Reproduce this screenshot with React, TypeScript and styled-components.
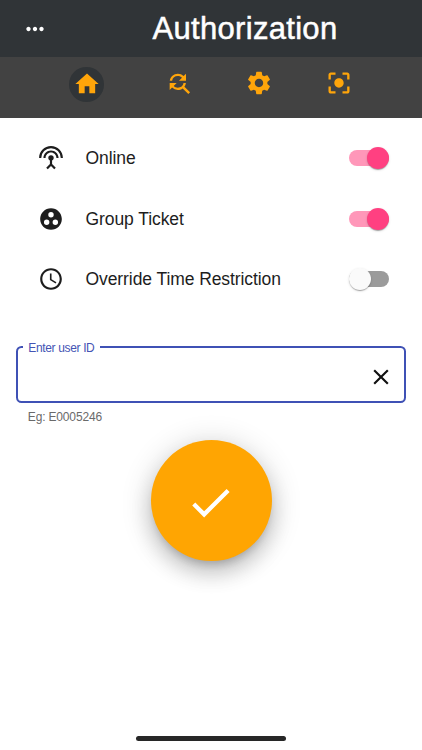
import React, { useState } from 'react';
import styled, { createGlobalStyle } from 'styled-components';
import {
  MdAccessTime,
  MdCenterFocusStrong,
  MdCheck,
  MdClose,
  MdFindReplace,
  MdGroupWork,
  MdHome,
  MdMoreHoriz,
  MdSettings,
  MdSettingsInputAntenna,
} from 'react-icons/md';

const GlobalStyle = createGlobalStyle`
  * { box-sizing: border-box; }
  body {
    margin: 0;
    background: #fff;
    font-family: "Liberation Sans", Arial, sans-serif;
  }
  svg { display: block; flex: none; }
`;

const Screen = styled.div`
  display: flex;
  flex-direction: column;
  height: 750px;
  width: 422px;
  overflow: hidden;
  background: #fff;
`;

const Header = styled.header`
  display: grid;
  grid-template-columns: 69.4px 1fr;
  align-items: center;
  height: 57px;
  background: #303437;
  color: #fff;
`;

const MenuButton = styled.button`
  display: flex;
  justify-content: center;
  padding: 0;
  border: 0;
  background: none;
  color: inherit;
`;

const Title = styled.h1`
  margin: 0;
  padding-left: 83.2px;
  font-size: 31px;
  line-height: 36px;
  font-weight: 400;
  letter-spacing: 0.3px;
  -webkit-text-stroke: 0.5px #fff;
`;

const Nav = styled.nav`
  display: flex;
  align-items: flex-start;
  height: 61px;
  padding: 10px 0 0 69.4px;
  background: #424242;
`;

const NavButton = styled.button<{ $active?: boolean }>`
  display: grid;
  place-items: center;
  width: 34.6px;
  height: 34.6px;
  margin-right: ${({ $active }) => ($active ? '57.4px' : '45.5px')};
  margin-top: ${({ $active }) => ($active ? '0' : '-1px')};
  padding: 0;
  border: 0;
  border-radius: 50%;
  background: ${({ $active }) => ($active ? '#303437' : 'none')};
  color: #ffa50a;
`;

const Options = styled.section`
  display: grid;
  grid-auto-rows: 60.6px;
  padding: 10px 33.3px 0 38px;
`;

const OptionRow = styled.div`
  display: grid;
  grid-template-columns: 26px 1fr auto;
  column-gap: 21.5px;
  align-items: center;
  color: #1d1d1d;
`;

const OptionLabel = styled.span`
  font-size: 17.5px;
  line-height: 24px;
  letter-spacing: -0.08px;
`;

const Track = styled.button<{ $on: boolean }>`
  display: flex;
  align-items: center;
  justify-content: ${({ $on }) => ($on ? 'flex-end' : 'flex-start')};
  width: 39.4px;
  height: 16px;
  padding: 0;
  border: 0;
  border-radius: 8px;
  background: ${({ $on }) => ($on ? '#ff97b9' : '#9b9b9b')};
`;

const Thumb = styled.span<{ $on: boolean }>`
  flex: none;
  width: 22px;
  height: 22px;
  border-radius: 50%;
  background: ${({ $on }) => ($on ? '#ff4081' : '#fafafa')};
  box-shadow: 0 2px 1px -1px rgba(0, 0, 0, 0.2), 0 1px 1px rgba(0, 0, 0, 0.14),
    0 1px 3px rgba(0, 0, 0, 0.12);
`;

const Field = styled.div`
  padding: 0 16.3px;
  margin-top: 30px;
`;

const Outline = styled.fieldset`
  display: flex;
  align-items: center;
  height: 63px;
  margin: 0;
  padding: 0 9.5px 1px 9px;
  border: 2px solid #3f51b5;
  border-radius: 5.5px;
  min-width: 0;
`;

const Legend = styled.legend`
  margin-left: -4px;
  padding: 2px 5.5px 0 5px;
  font-size: 12px;
  line-height: 12px;
  letter-spacing: -0.35px;
  color: #4454b4;
`;

const UserInput = styled.input`
  flex: 1;
  min-width: 0;
  height: 40px;
  padding: 0;
  border: 0;
  outline: 0;
  background: none;
  font: 17px "Liberation Sans", Arial, sans-serif;
`;

const ClearButton = styled.button`
  padding: 0;
  border: 0;
  background: none;
  color: #111;
`;

const Hint = styled.div`
  margin: 6px 0 0 11.5px;
  font-size: 12px;
  line-height: 16px;
  letter-spacing: -0.16px;
  color: #6a6a6a;
`;

const Submit = styled.button`
  display: grid;
  place-items: center;
  align-self: center;
  width: 121px;
  height: 121px;
  margin-top: 15.2px;
  padding: 4px 1.2px 0 0;
  border: 0;
  border-radius: 50%;
  background: #ffa502;
  color: #fff;
  box-shadow: 0 7px 9px -4px rgba(0, 0, 0, 0.2), 0 12px 19px 2px rgba(0, 0, 0, 0.14),
    0 4px 28px 5px rgba(0, 0, 0, 0.12);
`;

const HomeIndicator = styled.div`
  align-self: center;
  width: 150px;
  height: 5.4px;
  margin: auto 0 8.8px;
  border-radius: 3px;
  background: #272727;
`;

const navItems = [
  { label: 'Home', Icon: MdHome },
  { label: 'Find', Icon: MdFindReplace },
  { label: 'Settings', Icon: MdSettings },
  { label: 'Scan', Icon: MdCenterFocusStrong },
];

const options = [
  { label: 'Online', Icon: MdSettingsInputAntenna },
  { label: 'Group Ticket', Icon: MdGroupWork },
  { label: 'Override Time Restriction', Icon: MdAccessTime },
];

export default function App() {
  const [tab, setTab] = useState(0);
  const [values, setValues] = useState([true, true, false]);
  const [userId, setUserId] = useState('');

  const toggle = (index: number) =>
    setValues(values.map((value, i) => (i === index ? !value : value)));

  return (
    <>
      <GlobalStyle />
      <Screen>
        <Header>
          <MenuButton aria-label="Menu">
            <MdMoreHoriz size={26} />
          </MenuButton>
          <Title>Authorization</Title>
        </Header>
        <Nav>
          {navItems.map(({ label, Icon }, i) => (
            <NavButton key={label} aria-label={label} $active={tab === i} onClick={() => setTab(i)}>
              <Icon size={28} />
            </NavButton>
          ))}
        </Nav>
        <Options>
          {options.map(({ label, Icon }, i) => (
            <OptionRow key={label}>
              <Icon size={26} />
              <OptionLabel>{label}</OptionLabel>
              <Track
                role="switch"
                aria-label={label}
                aria-checked={values[i]}
                $on={values[i]}
                onClick={() => toggle(i)}
              >
                <Thumb $on={values[i]} />
              </Track>
            </OptionRow>
          ))}
        </Options>
        <Field>
          <Outline>
            <Legend>Enter user ID</Legend>
            <UserInput
              aria-label="Enter user ID"
              value={userId}
              onChange={(event) => setUserId(event.target.value)}
            />
            <ClearButton aria-label="Clear" onClick={() => setUserId('')}>
              <MdClose size={26} />
            </ClearButton>
          </Outline>
          <Hint>Eg: E0005246</Hint>
        </Field>
        <Submit aria-label="Submit">
          <MdCheck size={51} />
        </Submit>
        <HomeIndicator />
      </Screen>
    </>
  );
}
